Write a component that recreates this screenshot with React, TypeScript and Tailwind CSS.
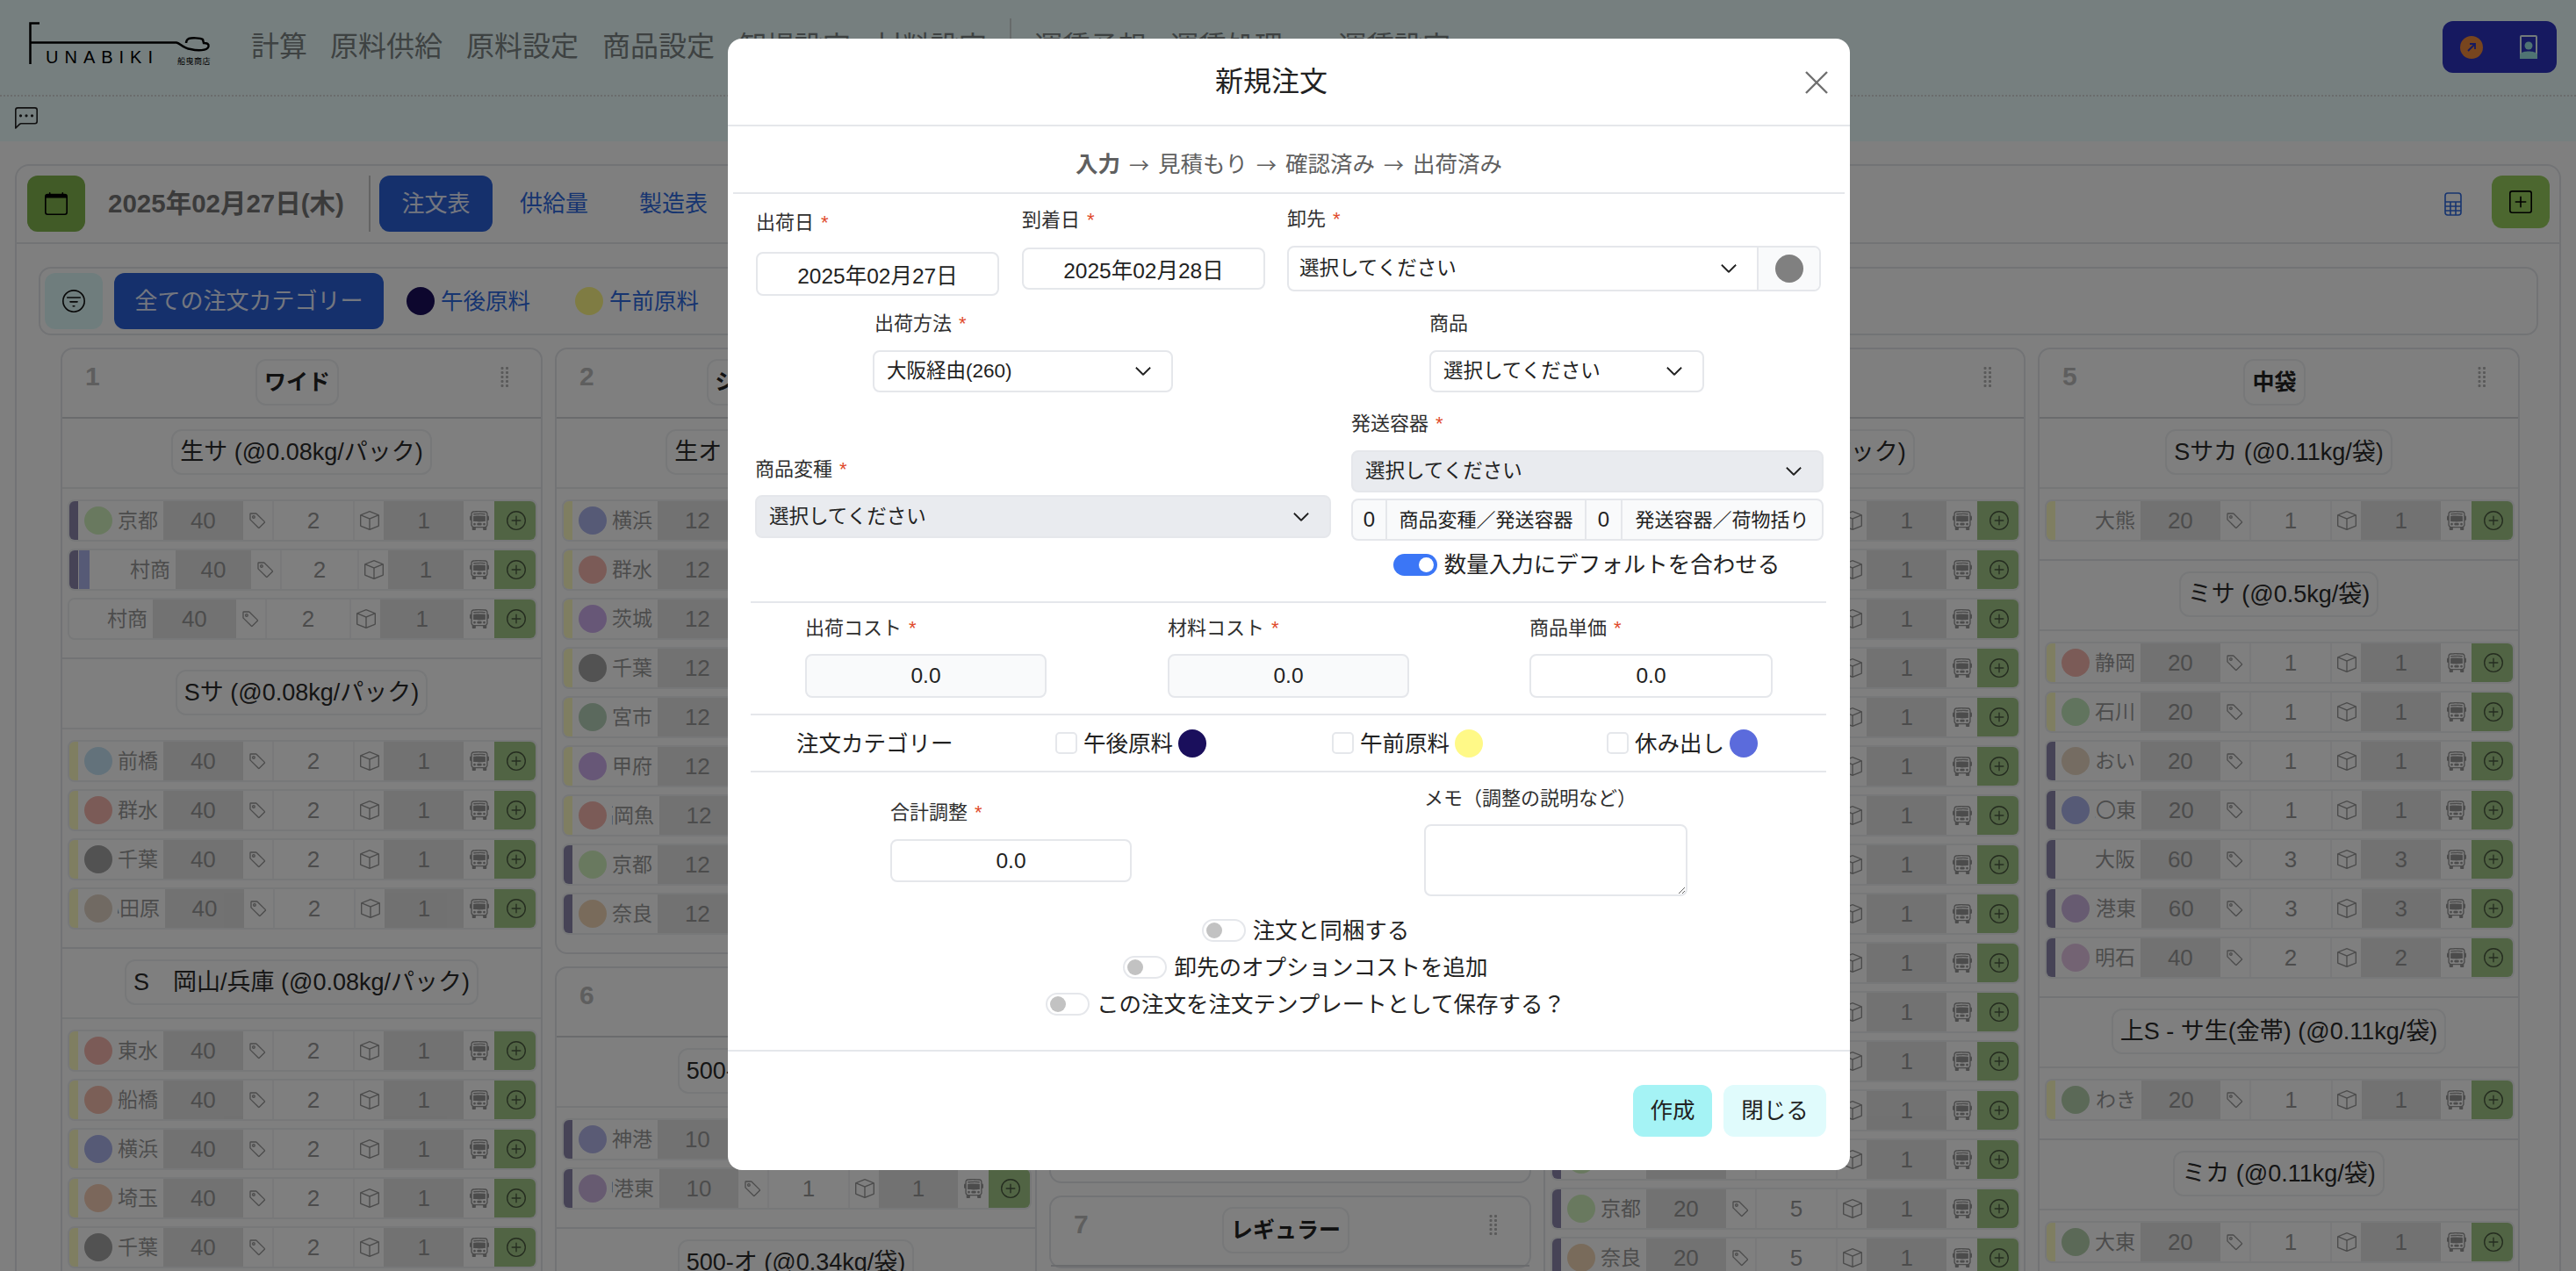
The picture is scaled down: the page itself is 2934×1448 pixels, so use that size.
import React from "react";
import { BsTag, BsBox, BsBusFront, BsPlusCircle, BsCalendar, BsFilterCircle, BsChatLeftDots, BsPlusSquare, BsChevronDown } from "react-icons/bs";

const Y = "#fff987";
const P = "#1a0f5c";
const B = "#5b6bdc";
const W = "#ffffff";
type R = { n: string; c?: string; b?: string[]; v?: [string, string, string]; w?: number };

const Grip = () => (
  <svg width="10" height="24" viewBox="0 0 10 24" className="text-[#b4b4b4]" fill="currentColor">
    {[1, 6, 11, 16, 21].map((y) => (
      <g key={y}>
        <rect x="0.5" y={y} width="3" height="3" rx="1" />
        <rect x="6" y={y} width="3" height="3" rx="1" />
      </g>
    ))}
  </svg>
);

function Row({ r, dv }: { r: R; dv: [string, string, string] }) {
  const v = r.v ?? dv;
  const bars = r.b ?? [];
  return (
    <div className="flex h-[48px] rounded-[8px] overflow-hidden border-2 border-[#eef0f2] box-border">
      <div className="flex flex-1 min-w-0 opacity-50 bg-white -m-[2px] mr-0">
        {bars.map((b, i) => (
          <div key={i} className={`w-[12px] shrink-0 ${i > 0 ? "ml-[1px]" : ""}`} style={{ background: b }} />
        ))}
        <div className="flex items-center shrink-0 pl-[7px] pr-[6px] gap-[6px] overflow-hidden" style={{ width: r.w ?? 97 }}>
          {r.c && <div className="w-[32px] h-[32px] rounded-full shrink-0" style={{ background: r.c }} />}
          <div className="flex-1 min-w-0 flex justify-end overflow-hidden whitespace-nowrap text-[23px] text-[#333]">
            <span className="shrink-0">{r.n}</span>
          </div>
        </div>
        <div className="flex-1 min-w-0 bg-[#c9c9c9] flex items-center justify-center text-[26px] text-[#333]">{v[0]}</div>
        <div className="w-[35px] shrink-0 flex items-center justify-center border-r-2 border-[#e5e7eb] text-[#333]"><BsTag size={21} /></div>
        <div className="flex-1 min-w-0 flex items-center justify-center text-[26px] text-[#333]">{v[1]}</div>
        <div className="w-[35px] shrink-0 flex items-center justify-center border-l-2 border-[#e5e7eb] text-[#333]"><BsBox size={22} /></div>
        <div className="flex-1 min-w-0 bg-[#c9c9c9] flex items-center justify-center text-[26px] text-[#333]">{v[2]}</div>
        <div className="w-[35px] shrink-0 flex items-center justify-center text-[#333]"><BsBusFront size={22} /></div>
      </div>
      <div className="w-[49px] shrink-0 -my-[2px] -mr-[2px] bg-[#a3c888] flex items-center justify-center text-[#4a5a40]"><BsPlusCircle size={22} /></div>
    </div>
  );
}

function Section({ title, rows, dv, last }: { title: string; rows: R[]; dv: [string, string, string]; last?: boolean }) {
  return (
    <div>
      <div className="flex justify-center pt-[12px] pb-[14px] border-b-2 border-[#eaecef]">
        <div className="h-[52px] px-[8px] flex items-center border-2 border-[#eef0f2] rounded-[12px] text-[27px] text-[#2b2b2b] whitespace-nowrap">{title}</div>
      </div>
      <div className={`pt-[12px] pb-[20px] pl-[6px] pr-[4px] flex flex-col gap-[8px] ${last ? "" : "border-b-2 border-[#e5e7eb]"}`}>
        {rows.map((r, i) => (
          <Row key={i} r={r} dv={dv} />
        ))}
      </div>
    </div>
  );
}

function Column({ num, title, children, cls = "" }: { num: string; title: string; children?: React.ReactNode; cls?: string }) {
  return (
    <div className={`w-[549px] shrink-0 border-2 border-[#e5e7eb] rounded-[14px] ${cls}`}>
      <div className="h-[79px] border-b-2 border-[#d4d6da] flex justify-between pr-[36px] pl-[26px]">
        <div className="w-[70px] pt-[11px] text-[30px] font-bold text-[#bcbcbc] leading-[40px]">{num}</div>
        <div className="h-[53px] mt-[11px] px-[8px] flex items-center border-2 border-[#eef0f2] rounded-[12px] text-[25px] font-bold text-[#222] whitespace-nowrap">{title}</div>
        <div className="w-[70px] flex justify-end pt-[19px]"><Grip /></div>
      </div>
      {children}
    </div>
  );
}

const Label = ({ t, req = true, cls = "" }: { t: string; req?: boolean; cls?: string }) => (
  <div className={`h-[32px] leading-[32px] text-[22px] text-[#2f2f2f] whitespace-nowrap ${cls}`}>
    {t}
    {req && <span className="text-[#e0492c] ml-[8px]">*</span>}
  </div>
);

const Sel = ({ t, cls = "" }: { t: string; cls?: string }) => (
  <div className={`flex items-center justify-between pl-[14px] pr-[22px] border-2 border-[#e5e7eb] rounded-[8px] text-[22.500px] text-[#222] ${cls}`}>
    <span>{t}</span>
    <BsChevronDown size={20} strokeWidth={0.8} />
  </div>
);

const Inp = ({ v, cls = "" }: { v: string; cls?: string }) => (
  <input readOnly value={v} className={`border-2 border-[#e5e7eb] rounded-[8px] text-center text-[24.500px] text-[#222] outline-none ${cls}`} />
);

const Toggle = ({ on }: { on?: boolean }) =>
  on ? (
    <div className="w-[50px] h-[25px] rounded-full bg-[#3b76f6] flex items-center justify-end pr-[4px]">
      <div className="w-[17px] h-[17px] rounded-full bg-white" />
    </div>
  ) : (
    <div className="w-[50px] h-[26px] rounded-full bg-white border-2 border-[#e5e7eb] flex items-center pl-[3px]">
      <div className="w-[18px] h-[18px] rounded-full bg-[#c2c2c2]" />
    </div>
  );

const Cat = ({ t, c, w }: { t: string; c: string; w: number }) => (
  <div className="flex items-center shrink-0" style={{ width: w }}>
    <div className="w-[25px] h-[25px] rounded-[5px] border-2 border-[#e5e7eb] bg-white" />
    <span className="ml-[7px] text-[25.500px] text-[#222] whitespace-nowrap">{t}</span>
    <div className="ml-[6px] w-[32px] h-[32px] rounded-full" style={{ background: c }} />
  </div>
);

const Arrow = () => <span className="mx-[10px] font-['Noto_Sans_CJK_JP',sans-serif] text-[23px]">→</span>;

const Navs = ["原料供給", "原料設定", "商品設定", "卸場設定", "材料設定"];

export default function App() {
  const d40: [string, string, string] = ["40", "2", "1"];
  const d12: [string, string, string] = ["12", "1", "1"];
  const d20: [string, string, string] = ["20", "1", "1"];
  const d10: [string, string, string] = ["10", "1", "1"];
  return (
    <div className="relative w-[2934px] h-[1448px] overflow-hidden bg-white font-['Liberation_Sans','Noto_Sans_CJK_JP',sans-serif]">
      <div className="h-[161px] bg-[#ecfeff]">
        <div className="h-[110px] border-b-2 border-dotted border-[#d4d8d8] flex items-start">
          <div className="relative w-[250px] h-[109px] shrink-0 ml-[33px]">
            <svg width="210" height="50" viewBox="0 0 210 50" className="absolute left-0 top-[25px] text-black" fill="none" stroke="currentColor">
              <path d="M1.500 48V1.500H12M1.500 23.500H168C172 24 175 30 184 31C192 33 203 33 204.500 28C205 25 203 24 199 24L198 20C195 18 185 18 182 19C180 20 179 22 179 24" strokeWidth="2.500" />
            </svg>
            <div className="absolute left-[19px] top-[56px] text-[20px] leading-[19px] tracking-[7px] text-black whitespace-nowrap">UNABIKI</div>
            <div className="absolute left-[169px] top-[65px] text-[9px] leading-[10px] tracking-[0.500px] text-black whitespace-nowrap">船曳商店</div>
          </div>
          <nav className="h-[105px] flex items-center gap-[27px] ml-[3px] text-[32px] text-[#7c8585] whitespace-nowrap">
            <span className="-mr-[1px]">計算</span>
            {Navs.map((n) => (
              <span key={n}>{n}</span>
            ))}
            <div className="w-[2px] h-[64px] bg-[#cfd6d6] -mx-[1px]" />
            <span>運賃予想</span>
            <span>運賃処理</span>
            <span className="ml-[36px]">運賃設定</span>
          </nav>
          <div className="ml-auto mr-[22px] mt-[24px] w-[130px] h-[59px] rounded-[12px] bg-[#2c32c0] flex items-center justify-between pl-[20px] pr-[22px]">
            <svg width="26" height="26" viewBox="0 0 26 26">
              <circle cx="13" cy="13" r="13" fill="#f08a3c" />
              <path d="M9 17L17 9M11 9h6v6" stroke="#2c32c0" strokeWidth="1.800" fill="none" />
            </svg>
            <svg width="20" height="27" viewBox="0 0 20 27">
              <rect width="20" height="27" rx="2" fill="#e4f5f5" />
              <rect x="2" y="2" width="16" height="23" fill="#2c32c0" />
              <circle cx="10" cy="12" r="4.500" fill="#9ee6e6" />
              <path d="M0 27v-5c2-3 6-3.500 10-3.500s8 .5 10 3.500v5z" fill="#9ee6e6" />
            </svg>
          </div>
        </div>
        <div className="pl-[17px] pt-[12px] text-[#222]"><BsChatLeftDots size={26} /></div>
      </div>

      <div className="mt-[26px] mx-[17px] border-2 border-[#e5e7eb] rounded-[16px] h-[1400px]">
        <div className="h-[89px] border-b-2 border-[#e5e7eb] flex items-start pt-[11px] pl-[12px] pr-[11px] text-[26px]">
          <div className="w-[66px] h-[64px] rounded-[12px] bg-[#83b64f] flex items-center justify-center text-black"><BsCalendar size={26} /></div>
          <div className="ml-[26px] h-[64px] flex items-center text-[29.500px] font-bold text-[#767676] whitespace-nowrap">2025年02月27日(木)</div>
          <div className="ml-[28px] w-[2px] h-[64px] bg-[#c9c9c9]" />
          <div className="ml-[10px] w-[129px] h-[64px] rounded-[12px] bg-[#2b61d9] text-[#e8eeff] flex items-center justify-center">注文表</div>
          <div className="ml-[31px] h-[64px] flex items-center text-[#2f6ae0]">供給量</div>
          <div className="ml-[58px] h-[64px] flex items-center text-[#2f6ae0]">製造表</div>
          <div className="ml-auto h-[64px] flex items-center text-[#2f6ae0]">
            <svg width="20" height="27" viewBox="0 0 20 27" fill="none" stroke="currentColor" strokeWidth="1.600">
              <rect x="1" y="1" width="18" height="25" rx="3" />
              <path d="M1 11h18M1 16h18M1 21h18M7 11v15M13 11v15" />
            </svg>
          </div>
          <div className="ml-[34px] w-[66px] h-[60px] rounded-[12px] bg-[#99cf5f] flex items-center justify-center text-black"><BsPlusSquare size={26} /></div>
        </div>

        <div className="mt-[26px] ml-[25px] mr-[24px] h-[78px] border-2 border-[#e5e7eb] rounded-[14px] flex items-center pl-[5px] text-[25.500px] text-[#2f6ae0]">
          <div className="w-[66px] h-[64px] rounded-[12px] bg-[#dffbfb] flex items-center justify-center text-[#111]"><BsFilterCircle size={26} /></div>
          <div className="ml-[13px] w-[307px] h-[64px] rounded-[12px] bg-[#2b61d9] text-[#e8eeff] flex items-center justify-center text-[26px]">全ての注文カテゴリー</div>
          <div className="ml-[26px] w-[32px] h-[32px] rounded-full" style={{ background: P }} />
          <span className="ml-[7px]">午後原料</span>
          <div className="ml-[51px] w-[32px] h-[32px] rounded-full" style={{ background: Y }} />
          <span className="ml-[7px]">午前原料</span>
        </div>

        <div className="mt-[14px] ml-[50px] flex items-start gap-[14px]">
          <div className="flex flex-col gap-[14px]">
            <Column num="1" title="ワイド">
              <Section title="生サ (@0.08kg/パック)" dv={d40} rows={[
                { n: "京都", c: "#a6e57f", b: [P] },
                { n: "○○村商", c: W, b: [P, B], w: 98 },
                { n: "○○村商", c: W },
              ]} />
              <Section title="Sサ (@0.08kg/パック)" dv={d40} rows={[
                { n: "前橋", c: "#8fcbee", b: [Y] },
                { n: "群水", c: "#f0705f", b: [Y] },
                { n: "千葉", c: "#4a4a4a", b: [Y] },
                { n: "小田原", c: "#c7ac90", b: [Y], w: 99 },
              ]} />
              <Section title="S　岡山/兵庫 (@0.08kg/パック)" dv={d40} rows={[
                { n: "東水", c: "#f0705f", b: [Y] },
                { n: "船橋", c: "#f07f60", b: [Y] },
                { n: "横浜", c: "#5b6bdc", b: [Y] },
                { n: "埼玉", c: "#f0a070", b: [Y] },
                { n: "千葉", c: "#4a4a4a", b: [Y] },
              ]} />
            </Column>
          </div>
          <div className="flex flex-col gap-[14px]">
            <Column num="2" title="ジャンボ特大袋">
              <Section last title="生オ (@0.08kg/パック)" dv={d12} rows={[
                { n: "横浜", c: "#5b6bdc", b: [Y] },
                { n: "群水", c: "#f0705f", b: [Y] },
                { n: "茨城", c: "#a060e0", b: [Y] },
                { n: "千葉", c: "#4a4a4a", b: [Y] },
                { n: "宮市", c: "#6fa878", b: [Y] },
                { n: "甲府", c: "#a060e0", b: [Y] },
                { n: "福岡魚", c: "#f0705f", b: [Y], w: 99 },
                { n: "京都", c: "#a6e57f", b: [P] },
                { n: "奈良", c: "#e5b070", b: [P] },
              ]} />
            </Column>
            <Column num="6" title="500">
              <Section title="500-サ (@0.34kg/袋)" dv={d10} rows={[
                { n: "神港", c: "#6a70d8", b: [P] },
                { n: "神港東", c: "#a070c8", b: [P], w: 99 },
              ]} />
              <Section last title="500-オ (@0.34kg/袋)" dv={d10} rows={[]} />
            </Column>
          </div>
          <div className="flex flex-col gap-[14px]">
            <Column num="3" title="生協" cls="h-[952px]" />
            <Column num="7" title="レギュラー" />
          </div>
          <div className="flex flex-col gap-[14px]">
            <Column num="4" title="小袋">
              <Section title="生サ (@0.08kg/パック)" dv={d20} rows={[
                ...Array.from({ length: 14 }, (_, i): R => ({ n: "東京", c: "#a6e57f", b: [i > 10 ? P : Y], v: ["20", "1", "1"] as [string, string, string] })),
                { n: "京都", c: "#a6e57f", b: [P], v: ["20", "5", "1"] },
                { n: "奈良", c: "#e5b070", b: [P], v: ["20", "5", "1"] },
              ]} />
            </Column>
          </div>
          <div className="flex flex-col gap-[14px]">
            <Column num="5" title="中袋">
              <Section title="Sサカ (@0.11kg/袋)" dv={d20} rows={[{ n: "大熊", b: [Y] }]} />
              <Section title="ミサ (@0.5kg/袋)" dv={d20} rows={[
                { n: "静岡", c: "#f0705f", b: [Y] },
                { n: "石川", c: "#86d27a", b: [Y] },
                { n: "おい", c: "#d6b48a", b: [P] },
                { n: "江〇東", c: "#5b6bdc", b: [P], w: 98 },
                { n: "大阪", b: [P], v: ["60", "3", "3"] },
                { n: "神港東", c: "#a070c8", b: [P], v: ["60", "3", "3"], w: 98 },
                { n: "明石", c: "#d090d0", b: [P], v: ["40", "2", "2"] },
              ]} />
              <Section title="上S - サ生(金帯) (@0.11kg/袋)" dv={d20} rows={[{ n: "いわき", c: "#6fa860", b: [Y], w: 98 }]} />
              <Section title="ミカ (@0.11kg/袋)" dv={d20} rows={[{ n: "大東", c: "#6fa860", b: [Y] }]} />
            </Column>
          </div>
        </div>
      </div>

      <div className="absolute inset-0 bg-black/50 flex justify-center items-start">
        <div className="mt-[44px] ml-[2px] w-[1278px] h-[1289px] bg-white rounded-[16px] flex flex-col text-[#222]">
          <div className="relative h-[100px] shrink-0 flex items-center justify-center pr-[40px] border-b-2 border-[#e5e7eb] text-[32px]">
            新規注文
            <svg width="28" height="28" viewBox="0 0 28 28" className="absolute right-[24px] top-[36px] text-[#6f6f6f]" stroke="currentColor" strokeWidth="2.400" fill="none">
              <path d="M2 2l24 24M26 2L2 26" />
            </svg>
          </div>
          <div className="h-[77px] shrink-0 mx-[6px] pt-[12px] flex items-center justify-center border-b-2 border-[#e5e7eb] text-[25.500px] text-[#5f5f5f]">
            <b>入力</b><Arrow />見積もり<Arrow />確認済み<Arrow />出荷済み
          </div>

          <div className="h-[118px] shrink-0 flex items-start pl-[32px]">
            <div className="w-[277px] pt-[17px]">
              <Label t="出荷日" />
              <Inp v="2025年02月27日" cls="mt-[17px] w-full h-[50px]" />
            </div>
            <div className="w-[277px] ml-[26px] pt-[14px]">
              <Label t="到着日" />
              <Inp v="2025年02月28日" cls="mt-[15px] w-full h-[48px]" />
            </div>
            <div className="w-[608px] ml-[25px] pt-[13px]">
              <Label t="卸先" />
              <div className="mt-[14px] h-[52px] flex border-2 border-[#e5e7eb] rounded-[8px] overflow-hidden">
                <div className="flex-1 flex items-center justify-between pl-[12px] pr-[22px] text-[22.500px]">
                  <span>選択してください</span>
                  <BsChevronDown size={20} strokeWidth={0.8} />
                </div>
                <div className="w-[71px] bg-[#f9fafb] border-l-2 border-[#e5e7eb] flex items-center justify-center">
                  <div className="w-[32px] h-[32px] rounded-full bg-[#808080]" />
                </div>
              </div>
            </div>
          </div>

          <div className="mt-[14px] shrink-0 flex items-start pl-[165px]">
            <div className="w-[342px]">
              <Label t="出荷方法" cls="pl-[2px]" />
              <Sel t="大阪経由(260)" cls="mt-[14px] h-[48px]" />
            </div>
            <div className="w-[313px] ml-[292px]">
              <Label t="商品" req={false} />
              <Sel t="選択してください" cls="mt-[14px] h-[48px]" />
            </div>
          </div>

          <div className="mt-[20px] shrink-0 flex items-start pl-[31px]">
            <div className="w-[656px] pt-[52px]">
              <Label t="商品変種" />
              <Sel t="選択してください" cls="mt-[13px] h-[49px] bg-[#e9ebef]" />
            </div>
            <div className="w-[538px] ml-[23px]">
              <Label t="発送容器" />
              <Sel t="選択してください" cls="mt-[14px] h-[48px] bg-[#e9ebef]" />
              <div className="mt-[7px] h-[48px] flex border-2 border-[#e5e7eb] rounded-[8px] overflow-hidden text-[22px] bg-[#f9fafb] whitespace-nowrap">
                <div className="w-[39px] flex items-center justify-center border-r-2 border-[#e5e7eb] text-[24px]">0</div>
                <div className="w-[227px] flex items-center justify-center border-r-2 border-[#e5e7eb]">商品変種／発送容器</div>
                <div className="w-[41px] flex items-center justify-center border-r-2 border-[#e5e7eb] text-[24px]">0</div>
                <div className="flex-1 flex items-center justify-center">発送容器／荷物括り</div>
              </div>
              <div className="mt-[8px] flex items-center justify-center gap-[8px] text-[25.500px] pr-[2px] whitespace-nowrap">
                <Toggle on />
                <span>数量入力にデフォルトを合わせる</span>
              </div>
            </div>
          </div>

          <div className="mt-[23px] ml-[26px] mr-[27px] shrink-0 border-t-2 border-[#e5e7eb] flex pl-[62px] pt-[13px] pb-[18px]">
            <div className="w-[275px]">
              <Label t="出荷コスト" />
              <Inp v="0.0" cls="mt-[13px] w-full h-[50px] bg-[#f9fafb]" />
            </div>
            <div className="w-[275px] ml-[138px]">
              <Label t="材料コスト" />
              <Inp v="0.0" cls="mt-[13px] w-full h-[50px] bg-[#f9fafb]" />
            </div>
            <div className="w-[277px] ml-[137px]">
              <Label t="商品単価" />
              <Inp v="0.0" cls="mt-[13px] w-full h-[50px]" />
            </div>
          </div>

          <div className="ml-[26px] mr-[27px] h-[67px] shrink-0 border-y-2 border-[#e5e7eb] flex items-center pl-[52px] text-[25.500px]">
            <span className="w-[295px] shrink-0">注文カテゴリー</span>
            <Cat t="午後原料" c={P} w={315} />
            <Cat t="午前原料" c={Y} w={313} />
            <Cat t="休み出し" c={B} w={200} />
          </div>

          <div className="shrink-0 flex items-start pl-[185px] mt-[2px]">
            <div className="w-[275px] pt-[28px]">
              <Label t="合計調整" />
              <Inp v="0.0" cls="mt-[14px] w-full h-[49px]" />
            </div>
            <div className="w-[300px] ml-[333px] pt-[12px]">
              <Label t="メモ（調整の説明など）" req={false} />
              <textarea className="block mt-[13px] w-full h-[82px] border-2 border-[#e5e7eb] rounded-[8px] outline-none" />
            </div>
          </div>

          <div className="mt-[24px] pl-[38px] shrink-0 flex flex-col items-center gap-[12px] text-[25.500px] whitespace-nowrap">
            <div className="h-[30px] flex items-center gap-[8px]"><Toggle /><span>注文と同梱する</span></div>
            <div className="h-[30px] flex items-center gap-[8px]"><Toggle /><span>卸先のオプションコストを追加</span></div>
            <div className="h-[30px] flex items-center gap-[8px]"><Toggle /><span>この注文を注文テンプレートとして保存する？</span></div>
          </div>

          <div className="mt-auto h-[137px] shrink-0 border-t-2 border-[#e5e7eb] flex justify-end items-start pt-[38px] pr-[27px] gap-[13px] text-[25.500px]">
            <div className="w-[90px] h-[59px] rounded-[12px] bg-[#a5f3f5] flex items-center justify-center">作成</div>
            <div className="w-[117px] h-[59px] rounded-[12px] bg-[#e0fbfc] flex items-center justify-center">閉じる</div>
          </div>
        </div>
      </div>
    </div>
  );
}
